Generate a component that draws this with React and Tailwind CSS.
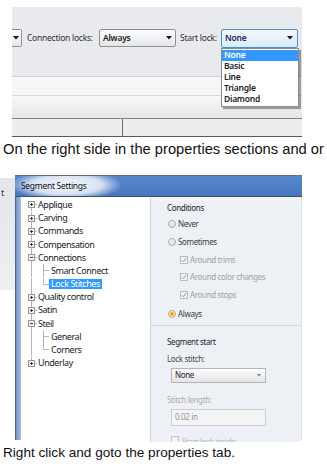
import React from "react";

const ui = "font-['Noto_Sans',sans-serif]";

function Arrow({ color = "#1a1a1a" }) {
  return (
    <svg width="6" height="4" viewBox="0 0 6 4" className="shrink-0">
      <path d="M0 0H6L3 3.5Z" fill={color} />
    </svg>
  );
}

function TopToolbar() {
  return (
    <div className="relative ml-[12px] mt-[7px] w-[290px]">
      <div className="h-[69px] bg-[#e8eaee] pt-[22px]">
        <div className={`flex h-[18px] items-center text-[8.5px] tracking-[-0.25px] text-[#303030] ${ui}`}>
          <div className="flex h-[18px] w-[10px] items-center rounded-r-[2px] border border-l-0 border-[#8d9096] bg-gradient-to-b from-white to-[#e6e7ea] pl-[1px]">
            <Arrow />
          </div>
          <span className="ml-[5px] w-[72px] whitespace-nowrap">Connection locks:</span>
          <div className="flex h-[18px] w-[77px] items-center justify-between rounded-[2px] border border-[#8d9096] bg-gradient-to-b from-white to-[#e4e5e8] pl-[3px] pr-[3px]">
            <span className="font-semibold text-[#1a1a1a]">Always</span>
            <Arrow />
          </div>
          <span className="ml-[4px] w-[41px] whitespace-nowrap">Start lock:</span>
          <div className="flex h-[19px] w-[77px] items-center justify-between rounded-[2px] border border-[#4f8fd0] bg-gradient-to-b from-[#f4f9fe] to-[#dcebf9] pl-[3px] pr-[4px]">
            <span className="font-semibold text-[#1b2a55]">None</span>
            <Arrow />
          </div>
        </div>
      </div>
      <div className="h-px bg-[#cfd3d8]" />
      <div className="h-[18px] bg-[#f5f6f7]" />
      <div className="h-px bg-[#d6d8db]" />
      <div className="h-[22px] bg-gradient-to-b from-[#f8f8f9] to-[#e4e5e7]" />
      <div className="h-px bg-[#858585]" />
      <div className="flex h-[17px] bg-[#ededee]">
        <div className="ml-[110px] h-full w-px bg-[#6a6a6a]" />
      </div>
      <div className="h-px bg-[#5a5a5a]" />

      <div className={`absolute left-[209px] top-[41px] z-10 w-[78px] border border-[#8c8c8c] bg-white py-px text-[8.5px] font-semibold tracking-[-0.25px] text-[#222] shadow-[2px_2px_1px_rgba(0,0,0,0.35)] ${ui}`}>
        {["None", "Basic", "Line", "Triangle", "Diamond"].map((t, i) => (
          <div
            key={t}
            className={`flex h-[11px] items-center pl-[2px] ${i === 0 ? "bg-[#3399ff] text-white" : ""}`}
          >
            {t}
          </div>
        ))}
      </div>
    </div>
  );
}

const tree = [
  { t: "Applique" },
  { t: "Carving" },
  { t: "Commands" },
  { t: "Compensation" },
  { t: "Connections", open: true, children: ["Smart Connect", "Lock Stitches"] },
  { t: "Quality control" },
  { t: "Satin" },
  { t: "Steil", open: true, children: ["General", "Corners"] },
  { t: "Underlay" },
];

function rows() {
  const out = [];
  tree.forEach((n, i) => {
    out.push({ kind: "root", t: n.t, open: n.open, first: i === 0, last: i === tree.length - 1 });
    if (n.children) {
      n.children.forEach((c, j) => {
        out.push({
          kind: "child",
          t: c,
          lastChild: j === n.children.length - 1,
          rootGoes: i < tree.length - 1,
          selected: c === "Lock Stitches",
        });
      });
    }
  });
  return out;
}

function TreeRow({ r }) {
  const h = 13.2;
  const m = 6.6;
  return (
    <div className="flex h-[13.2px] items-center">
      <svg width="30" height={h} className="shrink-0" shapeRendering="crispEdges">
        {r.kind === "root" ? (
          <>
            <line x1="10.5" y1={r.first ? m : 0} x2="10.5" y2={r.last ? m : h} stroke="#b5b5b5" />
            <line x1="10.5" y1="6.5" x2="16" y2="6.5" stroke="#b5b5b5" />
            <rect x="7.5" y="3.5" width="6" height="6" fill="#f4f4f4" stroke="#959595" />
            <line x1="9" y1="6.5" x2="12" y2="6.5" stroke="#404040" />
            {!r.open && <line x1="10.5" y1="5" x2="10.5" y2="8" stroke="#404040" />}
          </>
        ) : (
          <>
            {r.rootGoes && <line x1="10.5" y1="0" x2="10.5" y2={h} stroke="#b5b5b5" />}
            <line x1="22.5" y1="0" x2="22.5" y2={r.lastChild ? m : h} stroke="#b5b5b5" />
            <line x1="22.5" y1="6.5" x2="28" y2="6.5" stroke="#b5b5b5" />
          </>
        )}
      </svg>
      {r.kind === "root" ? (
        <span className="-ml-[13px] whitespace-nowrap text-[9px] leading-[10px] tracking-[-0.45px] text-[#1c1c1c]">
          {r.t}
        </span>
      ) : (
        <span
          className={`whitespace-nowrap text-[9px] leading-[10px] tracking-[-0.45px] ${
            r.selected ? "-ml-[2px] bg-[#3399ff] px-[2px] text-white" : "text-[#1c1c1c]"
          }`}
        >
          {r.t}
        </span>
      )}
    </div>
  );
}

function Radio({ on }) {
  return (
    <span
      className={`h-[8px] w-[8px] shrink-0 rounded-full border ${
        on
          ? "border-[#c9a46a] bg-[radial-gradient(circle,#e59a2a_0,#f0b44a_45%,#f8f1e4_55%)]"
          : "border-[#a9adb3] bg-gradient-to-br from-[#f7f7f7] to-[#dcdcdc]"
      }`}
    />
  );
}

function Check() {
  return (
    <span className="flex h-[8px] w-[8px] shrink-0 items-center justify-center border border-[#b9bcc1] bg-[#f3f3f3]">
      <svg width="6" height="6" viewBox="0 0 6 6">
        <path d="M0.8 3.2L2.4 4.8L5.2 0.9" fill="none" stroke="#9a9a9a" strokeWidth="1" />
      </svg>
    </span>
  );
}

function RightPanel() {
  const lab = "text-[8px] tracking-[-0.35px] whitespace-nowrap";
  return (
    <div className={`h-[245px] w-[151px] overflow-hidden border-l border-[#d0d4da] bg-[#edf0f4] ${ui}`}>
      <div className="h-[4px] bg-[#f2f4f7]" />
      <div className={`flex h-[14px] items-center pl-[16px] text-[#1d2430] ${lab}`}>Conditions</div>
      <div className={`flex h-[18px] items-center gap-[2px] pl-[17px] text-[#3d3d3d] ${lab}`}>
        <Radio /> Never
      </div>
      <div className={`flex h-[18px] items-center gap-[2px] pl-[17px] text-[#3d3d3d] ${lab}`}>
        <Radio /> Sometimes
      </div>
      <div className={`flex h-[18px] items-center gap-[2px] pl-[29px] text-[#a2a2a2] ${lab}`}>
        <Check /> Around trims
      </div>
      <div className={`flex h-[16px] items-center gap-[2px] pl-[29px] text-[#a2a2a2] ${lab}`}>
        <Check /> Around color changes
      </div>
      <div className={`flex h-[20px] items-center gap-[2px] pl-[29px] text-[#a2a2a2] ${lab}`}>
        <Check /> Around stops
      </div>
      <div className={`flex h-[18px] items-center gap-[2px] pl-[17px] text-[#3d3d3d] ${lab}`}>
        <Radio on /> Always
      </div>
      <div className="h-[2px]" />
      <div className="h-px bg-[#d6d9de]" />
      <div className="h-[7px]" />
      <div className={`flex h-[18px] items-center pl-[16px] text-[#1d2430] ${lab}`}>Segment start</div>
      <div className={`flex h-[16px] items-center pl-[16px] text-[#4a4a4a] ${lab}`}>Lock stitch:</div>
      <div className="ml-[20px] mt-px flex h-[15px] w-[95px] items-center justify-between border border-[#b4b6ba] bg-gradient-to-b from-white to-[#e3e4e6] pl-[3px] pr-[4px]">
        <span className={`text-[#1c1c1c] ${lab}`}>None</span>
        <svg width="4" height="3" viewBox="0 0 4 3">
          <path d="M0 0H4L2 2.5Z" fill="#777" />
        </svg>
      </div>
      <div className={`mt-[9px] flex h-[16px] items-center pl-[16px] text-[#adadad] ${lab}`}>Stitch length:</div>
      <div className={`ml-[20px] mt-px flex h-[17px] w-[95px] items-center border border-[#cbcdd0] bg-[#f4f4f5] pl-[3px] text-[#959595] ${lab}`}>
        0.02 in
      </div>
      <div className="h-[6px]" />
      <div className={`flex h-[13px] items-start gap-[3px] pl-[20px] pt-[4px] text-[#b9b9b9] ${lab}`}>
        <span className="h-[8px] w-[8px] border border-[#c4c6ca] bg-[#f3f3f3]" />
        Start lock inside
      </div>
    </div>
  );
}

function Dialog() {
  return (
    <div className="flex">
      <div className="mt-[3px] h-[112px] w-[15px] bg-gradient-to-b from-[#e3e6ea] to-[#eef0f2]">
        <span className={`pl-[1px] text-[9px] leading-[12px] text-[#333] ${ui}`}>t</span>
      </div>
      <div className="w-[287px]">
        <div className="relative h-[21px] overflow-hidden border-t border-[#67717e] bg-gradient-to-b from-[#5687cb] to-[#4777bd]">
          <div className="absolute -left-[4px] -top-[6px] h-[30px] w-[110px] rounded-full bg-[radial-gradient(ellipse_at_center,rgba(255,255,255,0.95)_0%,rgba(240,244,250,0.85)_45%,rgba(255,255,255,0)_72%)]" />
          <div className={`relative flex h-[20px] items-center pl-[6px] text-[8.5px] tracking-[-0.3px] text-[#101010] ${ui}`}>
            Segment Settings
          </div>
        </div>
        <div className="h-px bg-[#3f4f66]" />
        <div className="flex h-[245px]">
          <div className="h-[243px] w-[6px] border-l border-[#4d678e] bg-gradient-to-r from-[#7594c2] to-[#a9bfdd]" />
          <div className={`h-[243px] w-[129px] bg-white pt-[1.4px] ${ui}`}>
            {rows().map((r) => (
              <TreeRow key={r.t} r={r} />
            ))}
          </div>
          <RightPanel />
          <div className="h-[243px] w-px bg-[#dfe3e8]" />
        </div>
      </div>
    </div>
  );
}

export default function App() {
  return (
    <div className="h-[468px] w-[327px] overflow-hidden bg-white">
      <TopToolbar />
      <p className="mt-[3.6px] whitespace-nowrap pl-[3px] font-['Liberation_Sans',Arial,sans-serif] text-[14.7px] leading-[17px] text-[#111]">
        On the right side in the properties sections and or
      </p>
      <div className="mt-[17.4px]">
        <Dialog />
      </div>
      <p className="mt-[2.5px] whitespace-nowrap pl-[3px] font-['Liberation_Sans',Arial,sans-serif] text-[13.6px] leading-[17px] text-[#111]">
        Right click and goto the properties tab.
      </p>
    </div>
  );
}
